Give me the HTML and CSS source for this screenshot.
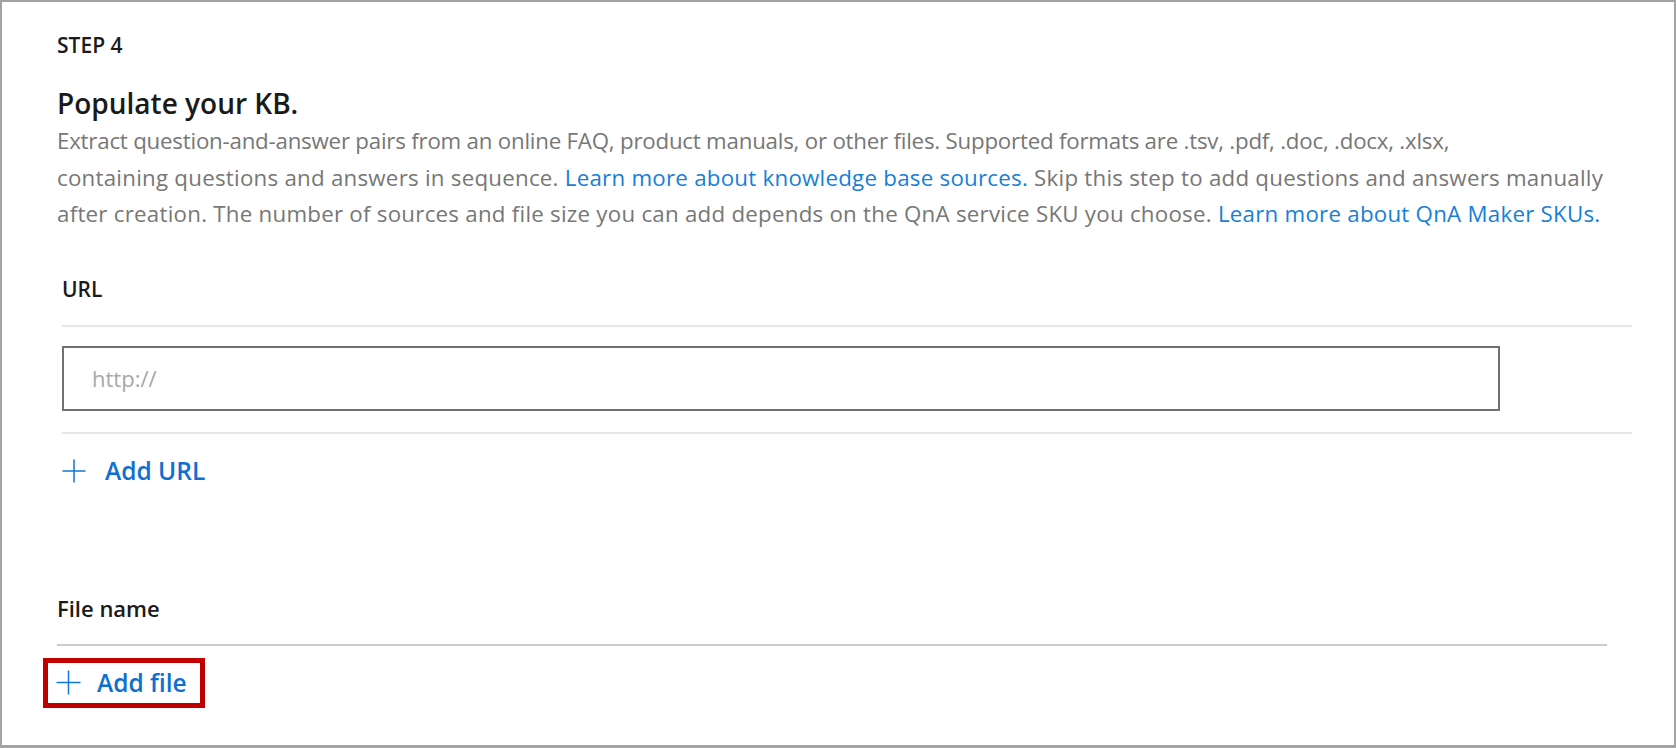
FILE: index.html
```html
<!DOCTYPE html>
<html lang="en">
<head>
<meta charset="utf-8">
<title>Populate your KB</title>
<link rel="stylesheet" href="styles.css">
</head>
<body>
<div class="frame">
  <div class="step">STEP 4</div>
  <h1 class="title">Populate your KB.</h1>
  <p class="desc"><span class="line-tight">Extract question-and-answer pairs from an online FAQ, product manuals, or other files. Supported formats are .tsv, .pdf, .doc, .docx, .xlsx,</span><br>containing questions and answers in sequence. <a class="link" href="#">Learn more about knowledge base sources.</a> Skip this step to add questions and answers manually<br>after creation. The number of sources and file size you can add depends on the QnA service SKU you choose. <a class="link" href="#">Learn more about QnA Maker SKUs.</a></p>

  <section class="url-section">
    <div class="col-label">URL</div>
    <div class="rule rule-light rule-top"></div>
    <div class="input-row">
      <div class="url-input">http://</div>
    </div>
    <div class="rule rule-light"></div>
    <a class="add-btn add-url" href="#">
      <svg class="plus" width="24" height="24" viewBox="0 0 24 24"><path d="M12 0.5V23.5M0.5 12H23.5" stroke="#0f78d4" stroke-width="1.5" fill="none"/></svg>
      <span>Add URL</span>
    </a>
  </section>

  <section class="file-section">
    <div class="file-label">File name</div>
    <div class="rule rule-file"></div>
    <div class="highlight">
      <a class="add-btn add-file" href="#">
        <svg class="plus" width="25" height="25" viewBox="0 0 25 25"><path d="M12.5 0.5V24.5M0.5 12.5H24.5" stroke="#0f78d4" stroke-width="1.5" fill="none"/></svg>
        <span>Add file</span>
      </a>
    </div>
  </section>
</div>
</body>
</html>
```

FILE: styles.css
```css
html, body {
  margin: 0;
  padding: 0;
  background: #ffffff;
}

.frame {
  box-sizing: border-box;
  width: 1676px;
  height: 748px;
  border: 2px solid #a3a3a3;
  border-bottom-width: 3px;
  padding: 30px 0 0 55px;
  font-family: "Open Sans", "Noto Sans", sans-serif;
  color: #1b1b1b;
  overflow: hidden;
}

.step {
  font-size: 21px;
  font-weight: 600;
  line-height: 26px;
  color: #1b1b1b;
}

.title {
  margin: 28px 0 0 0;
  font-size: 28px;
  font-weight: 600;
  line-height: 34px;
  color: #1a1a1a;
}

.desc {
  margin: 3px 0 0 0;
  font-size: 22.3px;
  line-height: 36.5px;
  letter-spacing: 0.25px;
  color: #777777;
  white-space: nowrap;
}

.line-tight {
  letter-spacing: -0.22px;
}

.link {
  color: #1680d6;
  text-decoration: none;
}

.url-section {
  margin: 43px 0 0 5px;
  width: 1570px;
}

.col-label {
  font-size: 21px;
  font-weight: 600;
  line-height: 26px;
  color: #1b1b1b;
}

.rule {
  height: 2px;
}

.rule-light {
  background: #e6e6e6;
}

.rule-top {
  margin-top: 23px;
}

.input-row {
  padding: 19px 0 21px 0;
}

.url-input {
  box-sizing: border-box;
  width: 1438px;
  height: 65px;
  border: 2px solid #727272;
  padding-left: 28px;
  font-size: 22px;
  line-height: 61px;
  color: #a8a8a8;
}

.add-btn {
  display: flex;
  align-items: center;
  text-decoration: none;
  color: #0f6fcf;
  font-weight: 600;
  font-size: 24.5px;
}

.add-url {
  margin-top: 25px;
  gap: 19px;
  height: 24px;
}

.plus {
  display: block;
  flex: none;
}

.file-section {
  margin-top: 110px;
  width: 1550px;
}

.file-label {
  font-size: 22px;
  font-weight: 600;
  line-height: 30px;
  color: #1a1a1a;
}

.rule-file {
  margin-top: 21px;
  background: #cccccc;
}

.highlight {
  display: inline-flex;
  margin: 12px 0 0 -14px;
  border: 5px solid #c00000;
  padding: 5px 13px 5px 8px;
}

.add-file {
  gap: 16px;
  height: 30px;
}
```
